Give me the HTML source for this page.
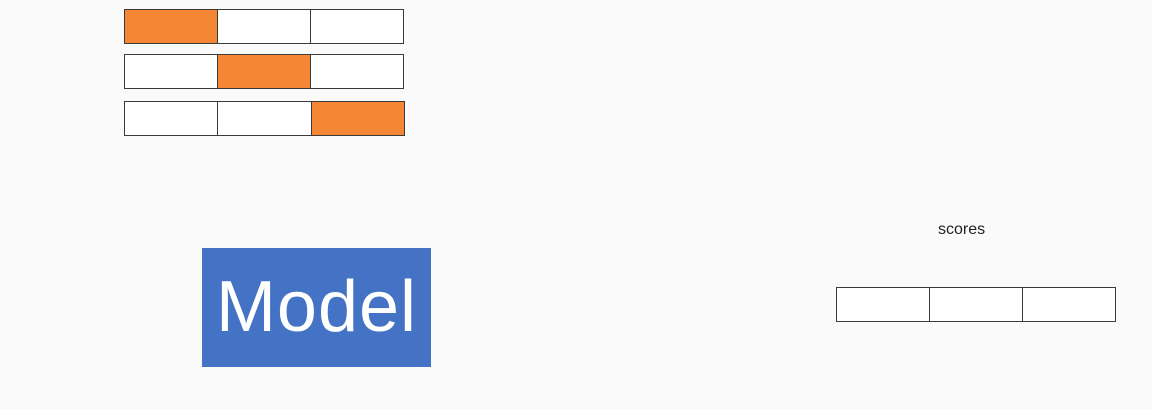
<!DOCTYPE html>
<html><head><style>
body{margin:0;width:1152px;height:409px;background:#fafafa;position:relative;overflow:hidden;font-family:"Liberation Sans",sans-serif}
.r{position:absolute;height:33px;border:1px solid #3a3a3a;display:flex;background:#fff}
.r div{flex:1;border-right:1px solid #3a3a3a}
.r div:last-child{border-right:none}
.o{background:#f58634}
</style></head><body>
<div class="r" style="left:124px;top:9px;width:278px"><div class="o"></div><div></div><div></div></div>
<div class="r" style="left:124px;top:54px;width:278px"><div></div><div class="o"></div><div></div></div>
<div class="r" style="left:124px;top:101px;width:279px"><div></div><div></div><div class="o"></div></div>
<div style="position:absolute;left:202px;top:248px;width:229px;height:119px;background:#4472c4;color:#fff;font-size:72px;line-height:119px;text-align:center;letter-spacing:1px">Model</div>
<div style="position:absolute;left:938px;top:221px;font-size:16px;color:#222">scores</div>
<div class="r" style="left:836px;top:287px;width:278px"><div></div><div></div><div></div></div>
</body></html>
